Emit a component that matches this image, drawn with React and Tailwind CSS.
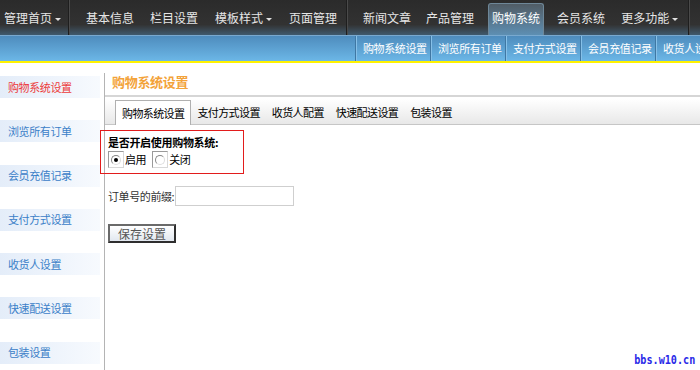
const TOP_NAV = [
  { label: '基本信息', ml: 'ml-[16px]' },
  { label: '栏目设置', ml: 'ml-[16px]' },
  { label: '模板样式', ml: 'ml-[17px]', caret: true },
  { label: '页面管理', ml: 'ml-[17px]' },
]

const TOP_NAV_2 = [
  { label: '新闻文章', ml: 'ml-[15px]' },
  { label: '产品管理', ml: 'ml-[15px]' },
]

const SUB_NAV = ['购物系统设置', '浏览所有订单', '支付方式设置', '会员充值记录', '收货人设']

const SIDE = ['购物系统设置', '浏览所有订单', '会员充值记录', '支付方式设置', '收货人设置', '快速配送设置', '包装设置']

const TABS = ['支付方式设置', '收货人配置', '快速配送设置', '包装设置']

function Caret() {
  return <span className="ml-[3px] mt-[3px] inline-block border-x-[3px] border-t-[3px] border-x-transparent border-t-[#e0e0e0]" />
}

function Sep() {
  return (
    <div className="flex h-[35px] shrink-0">
      <div className="w-px bg-[#1e1e1e]" />
      <div className="w-px bg-[#4a4a4a]" />
    </div>
  )
}

function RadioBox({ checked, label }) {
  return (
    <label className="flex items-center">
      <span className="flex h-[17px] w-[16px] items-center justify-center border border-t-[#9a9a9a] border-l-[#9a9a9a] border-r-[#d8d8d8] border-b-[#d8d8d8] bg-white">
        <span className="flex h-[10px] w-[10px] items-center justify-center rounded-full border border-t-[#888] border-l-[#888] border-r-[#ddd] border-b-[#ddd] bg-white">
          {checked && <span className="h-[4px] w-[4px] rounded-full bg-black" />}
        </span>
      </span>
      <span className="ml-px text-[11px] tracking-[-0.4px] text-black">{label}</span>
    </label>
  )
}

export default function App() {
  return (
    <div className="relative h-[370px] w-[700px] overflow-hidden bg-white font-['Noto_Sans_CJK_SC','Noto_Sans',sans-serif] leading-none">
      {/* top menu */}
      <div className="flex h-[35px] items-center whitespace-nowrap bg-gradient-to-b from-[#2b2b2b] via-[#323232] via-70% to-[#3f5a6e] text-[12px] text-[#e6e6e6]">
        <div className="ml-[4px] flex items-center">
          <span>管理首页</span>
          <Caret />
        </div>
        <div className="ml-[7px]"><Sep /></div>
        {TOP_NAV.map(({ label, ml, caret }) => (
          <div key={label} className={`flex items-center ${ml}`}>
            <span>{label}</span>
            {caret && <Caret />}
          </div>
        ))}
        <div className="ml-[9px]"><Sep /></div>
        {TOP_NAV_2.map(({ label, ml }) => (
          <div key={label} className={`flex items-center ${ml}`}>
            <span>{label}</span>
          </div>
        ))}
        <div className="ml-[14px] mt-[6px] flex h-[32px] w-[56px] items-center justify-center self-end rounded-t-[3px] border border-b-0 border-[#6e8798] bg-gradient-to-b from-[#505c65] to-[#5d8fb3] pb-[4px] text-white">
          购物系统
        </div>
        <div className="ml-[13px] flex items-center">会员系统</div>
        <div className="ml-[16px] flex items-center">
          <span>更多功能</span>
          <Caret />
        </div>
        <div className="ml-[10px]"><Sep /></div>
      </div>

      {/* sub menu */}
      <div className="flex h-[26px] border-t border-[#79a9cf] bg-gradient-to-b from-[#4e8cbd] to-[#6cb7e7]">
        <div className="ml-[355px] flex h-full whitespace-nowrap">
          {SUB_NAV.map((s, i) => (
            <div
              key={s}
              className={`flex h-full shrink-0 items-center border-l border-l-[#3f77a3] pl-[7px] text-[11px] tracking-[-0.4px] text-white shadow-[inset_1px_0_0_#86c0e8] ${
                i === SUB_NAV.length - 1 ? 'w-[44px]' : 'w-[75px]'
              }`}
            >
              {s}
            </div>
          ))}
        </div>
      </div>
      <div className="h-[2px] bg-[#fff200]" />

      <div className="mt-[10px] flex">
        {/* sidebar */}
        <aside className="flex w-[104px] shrink-0 flex-col gap-[22.3px] pt-[3px]">
          {SIDE.map((s, i) => (
            <div
              key={s}
              className={`flex h-[22px] w-[100px] items-center bg-gradient-to-r from-[#e4edf9] to-[#f7fafe] pl-[8px] text-[11px] tracking-[-0.4px] ${
                i === 0 ? 'text-[#ec3a3a]' : 'text-[#3b80c8]'
              }`}
            >
              {s}
            </div>
          ))}
        </aside>

        {/* main */}
        <main className="h-[300px] flex-1 border-l border-[#b4b4b4]">
          <div className="border-b-2 border-[#d6d6d6] pb-[7px] pl-[7px] pt-[2px] text-[13px] font-bold tracking-[-0.3px] text-[#f3a33a]">
            购物系统设置
          </div>

          <div className="mt-[2px] flex h-[26px] items-end border-b border-[#c6c6c6] bg-gradient-to-b from-white to-[#e8e8e8] pl-[10px]">
            <div className="-mb-px flex h-[25px] items-center border border-b-0 border-[#b0b0b0] bg-white px-[6px] text-[11px] tracking-[-0.6px] text-black">
              购物系统设置
            </div>
            {TABS.map((t) => (
              <div key={t} className="flex h-[24px] items-center px-[6px] text-[11px] tracking-[-0.6px] text-black">
                {t}
              </div>
            ))}
          </div>

          <div className="-ml-[5px] mt-[5px] h-[44px] w-[144px] border border-[#e21c1c] pl-[7px] pt-[6px]">
            <div className="text-[11px] font-bold tracking-[-0.3px] text-black">是否开启使用购物系统:</div>
            <div className="mt-[3px] flex items-center gap-[6px]">
              <RadioBox checked label="启用" />
              <RadioBox label="关闭" />
            </div>
          </div>

          <div className="ml-[3px] mt-[12px] flex items-center">
            <span className="text-[11px] tracking-[-0.4px] text-[#333]">订单号的前缀:</span>
            <input className="ml-px h-[20px] w-[119px] border border-[#cfcfcf] bg-white outline-none" />
          </div>

          <button className="ml-[3px] mt-[18px] flex h-[19px] w-[68px] items-center justify-center border-2 border-t-[#6a6a6a] border-l-[#6a6a6a] border-r-[#2e2e2e] border-b-[#2e2e2e] bg-gradient-to-b from-white to-[#e1e7ef] text-[12px] text-[#555]">
            保存设置
          </button>
        </main>
      </div>

      <div className="absolute bottom-[4px] right-[5px] origin-right scale-x-[0.78] font-['DejaVu_Sans_Mono',monospace] text-[13px] font-bold text-[#2a2ae8]">
        bbs.w10.cn
      </div>
    </div>
  )
}
